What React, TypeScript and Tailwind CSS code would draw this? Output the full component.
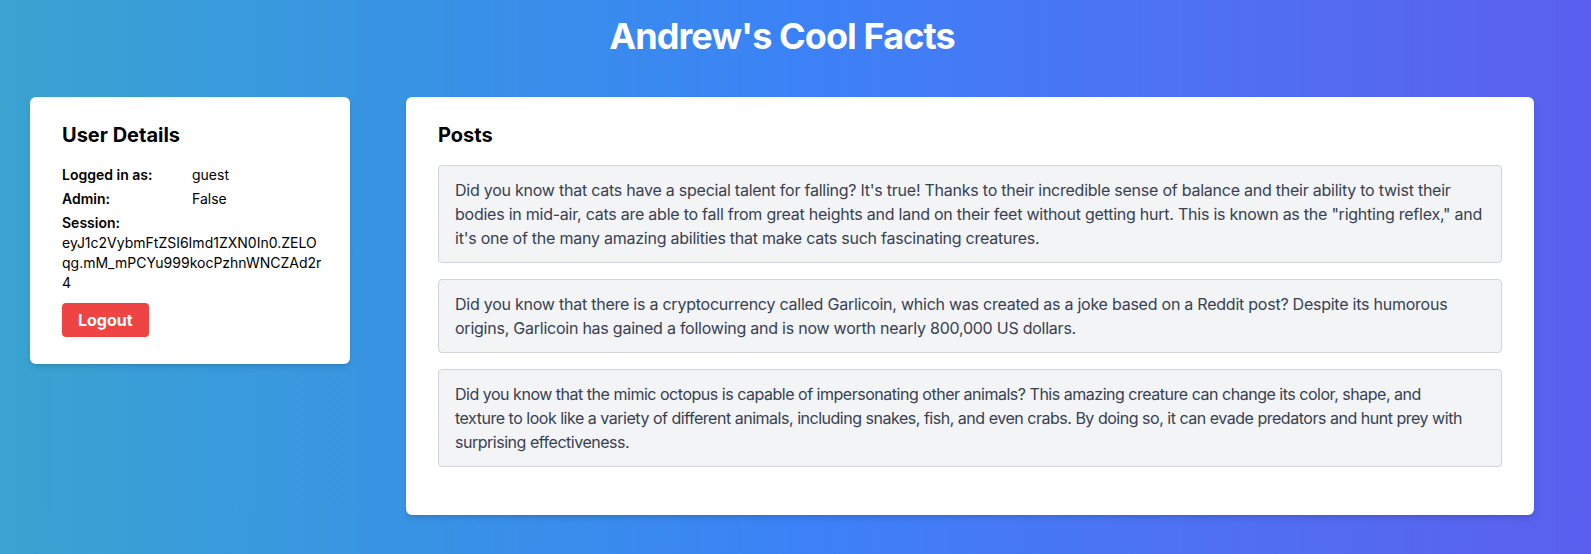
const posts = [
  {
    lines: [
      "Did you know that cats have a special talent for falling? It's true! Thanks to their incredible sense of balance and their ability to twist their bodies in mid-air, cats are able to fall from great heights and land on their feet without getting hurt. This is known as the \"righting reflex,\" and it's one of the many amazing abilities that make cats such fascinating creatures.",
    ],
    track: "tracking-[-0.015em]",
  },
  {
    lines: [
      "Did you know that there is a cryptocurrency called Garlicoin, which was created as a joke based on a Reddit post? Despite its humorous origins, Garlicoin has gained a following and is now worth nearly 800,000 US dollars.",
    ],
    track: "tracking-[-0.015em]",
  },
  {
    lines: [
      "Did you know that the mimic octopus is capable of impersonating other animals? This amazing creature can change its color, shape, and",
      "texture to look like a variety of different animals, including snakes, fish, and even crabs. By doing so, it can evade predators and hunt prey with surprising effectiveness.",
    ],
    track: "tracking-[-0.03em]",
  },
];

export default function App() {
  return (
    <div className="min-h-screen w-full bg-linear-to-r from-[#3aa3d0] via-[#3b82f6] to-[#5a5fee] font-['Inter',sans-serif] pb-10 pr-[27px]">
      <h1 className="pt-4 text-4xl leading-10 font-bold tracking-tight text-white text-center">
        Andrew's Cool Facts
      </h1>

      <div className="flex items-start px-[30px] gap-[56px] mt-[41px]">
        {/* user details */}
        <div className="w-80 shrink-0 bg-white rounded-md shadow-md px-8 pt-6 pb-[27px] text-black">
          <h2 className="text-xl font-bold mb-4">User Details</h2>
          <div className="grid grid-cols-2 text-sm mb-1">
            <span className="font-semibold">Logged in as:</span>
            <span className="pl-0.5">guest</span>
          </div>
          <div className="grid grid-cols-2 text-sm mb-1">
            <span className="font-semibold">Admin:</span>
            <span className="pl-0.5">False</span>
          </div>
          <div className="text-sm">
            <span className="font-semibold block">Session:</span>
            <span className="block whitespace-nowrap">
              eyJ1c2VybmFtZSI6Imd1ZXN0In0.ZELO
              <br />
              qg.mM_mPCYu999kocPzhnWNCZAd2r
              <br />4
            </span>
          </div>
          <button className="mt-[10px] bg-[#ef4444] text-white font-bold px-4 py-[5px] rounded">
            Logout
          </button>
        </div>

        {/* posts */}
        <div className="flex-1 bg-white rounded-md shadow-md px-8 pt-6 pb-8">
          <h2 className="text-xl font-bold mb-4 text-black">Posts</h2>
          {posts.map((p, i) => (
            <div
              key={i}
              className={
                "mb-4 bg-[#f3f4f6] border border-[#d1d5db] rounded px-4 py-3 text-[#374151] " +
                p.track
              }
            >
              {p.lines.map((l, j) => (
                <span key={j}>
                  {j > 0 && <br />}
                  {l}
                </span>
              ))}
            </div>
          ))}
        </div>
      </div>
    </div>
  );
}
